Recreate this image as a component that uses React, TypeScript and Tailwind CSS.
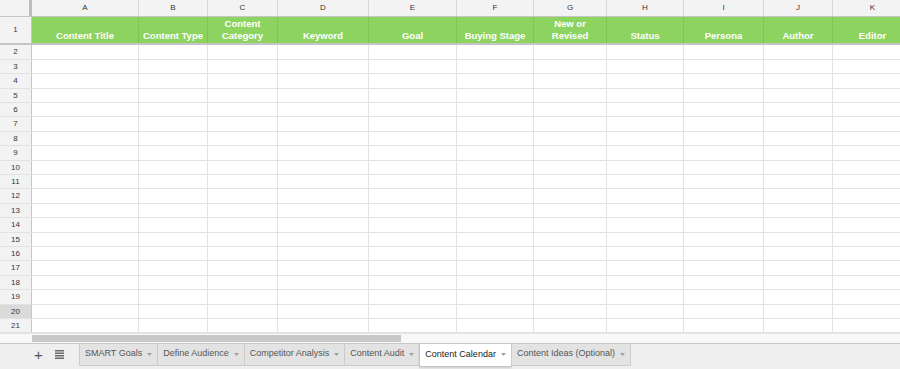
const columns = [
  { letter: 'A', title: ['Content Title'], w: 'w-[107px]' },
  { letter: 'B', title: ['Content Type'], w: 'w-[69px]' },
  { letter: 'C', title: ['Content', 'Category'], w: 'w-[70px]' },
  { letter: 'D', title: ['Keyword'], w: 'w-[91px]' },
  { letter: 'E', title: ['Goal'], w: 'w-[88px]' },
  { letter: 'F', title: ['Buying Stage'], w: 'w-[77px]' },
  { letter: 'G', title: ['New or', 'Revised'], w: 'w-[73px]' },
  { letter: 'H', title: ['Status'], w: 'w-[77px]' },
  { letter: 'I', title: ['Persona'], w: 'w-[80px]' },
  { letter: 'J', title: ['Author'], w: 'w-[69px]' },
  { letter: 'K', title: ['Editor'], w: 'w-[80px]' },
];

const rows = Array.from({ length: 20 }, (_, i) => i + 2);

const tabs = [
  'SMART Goals',
  'Define Audience',
  'Competitor Analysis',
  'Content Audit',
  'Content Calendar',
  'Content Ideas (Optional)',
];

function Caret() {
  return (
    <svg width="5" height="3" viewBox="0 0 5 3" className="shrink-0">
      <path d="M0 0h5L2.5 3z" fill="#a0a0a0" />
    </svg>
  );
}

export default function App() {
  return (
    <div className="w-[900px] h-[369px] flex flex-col overflow-hidden bg-white font-['Liberation_Sans',Arial,sans-serif]">
      {/* column letters */}
      <div className="flex h-[17px] shrink-0 bg-[#f3f3f3] border-b border-[#c6c6c6]">
        <div className="relative w-[32px] shrink-0 border-r border-[#c6c6c6]">
          <div className="absolute right-[-1px] top-0 h-full w-[3px] bg-[#bdbdbd]" />
        </div>
        {columns.map((c) => (
          <div
            key={c.letter}
            className={`${c.w} shrink-0 border-r border-[#d6d6d6] flex items-center justify-center text-[8px] text-[#333]`}
          >
            {c.letter}
          </div>
        ))}
      </div>

      {/* header row */}
      <div className="flex h-[28px] shrink-0 border-b-2 border-[#c4c4c4]">
        <div className="w-[32px] shrink-0 bg-[#f3f3f3] border-r border-[#c6c6c6] flex items-center justify-center text-[8px] text-[#6b2a2a]">
          1
        </div>
        {columns.map((c) => (
          <div
            key={c.letter}
            className={`${c.w} shrink-0 bg-[#8dd35f] border-r border-[#7fc353] flex flex-col items-center justify-end pb-[1px] text-[9.5px] leading-[12px] font-bold text-white`}
          >
            {c.title.map((t) => (
              <span key={t}>{t}</span>
            ))}
          </div>
        ))}
      </div>

      {/* body rows */}
      <div className="flex flex-col shrink-0">
        {rows.map((r, i) => (
          <div
            key={r}
            className={`flex ${i % 5 === 0 || i % 5 === 2 ? 'h-[15px]' : 'h-[14px]'} border-b border-[#e2e2e2]`}
          >
            <div
              className={`w-[32px] shrink-0 border-r border-[#c6c6c6] flex items-center justify-center text-[8px] text-[#333] ${
                r === 20 ? 'bg-[#dadada]' : 'bg-[#f3f3f3]'
              }`}
            >
              {r}
            </div>
            {columns.map((c) => (
              <div key={c.letter} className={`${c.w} shrink-0 border-r border-[#e2e2e2]`} />
            ))}
          </div>
        ))}
      </div>

      {/* horizontal scrollbar */}
      <div className="flex h-[10px] shrink-0 bg-[#f8f8f8] border-t border-[#e4e4e4]">
        <div className="w-[32px] shrink-0" />
        <div className="w-[369px] h-[7px] mt-[1px] bg-[#c8c8c8]" />
      </div>

      {/* sheet tabs */}
      <div className="flex flex-1 items-start bg-[#efefef] border-t border-[#c9c9c9]">
        <div className="flex items-center h-[21px] pl-[34px] gap-[12px] w-[80px] shrink-0">
          <span className="text-[15px] leading-none text-[#555] font-light">+</span>
          <svg width="9" height="9" viewBox="0 0 9 9">
            <rect x="0" y="0" width="9" height="1.5" fill="#6a6a6a" />
            <rect x="0" y="2.5" width="9" height="1.5" fill="#6a6a6a" />
            <rect x="0" y="5" width="9" height="1.5" fill="#6a6a6a" />
            <rect x="0" y="7.5" width="9" height="1.5" fill="#6a6a6a" />
          </svg>
        </div>
        {tabs.map((t) => {
          const active = t === 'Content Calendar';
          return (
            <div
              key={t}
              className={`flex items-center gap-[5px] px-[5px] pb-[1px] border-r border-l border-b text-[9px] whitespace-nowrap -ml-px ${
                active
                  ? 'bg-white border-[#c4c4c4] text-[#222] h-[23px] shadow-[0_1px_2px_rgba(0,0,0,0.15)]'
                  : 'bg-[#e3e3e3] border-[#cbcbcb] text-[#555] h-[22px]'
              }`}
            >
              <span>{t}</span>
              <Caret />
            </div>
          );
        })}
      </div>
    </div>
  );
}
